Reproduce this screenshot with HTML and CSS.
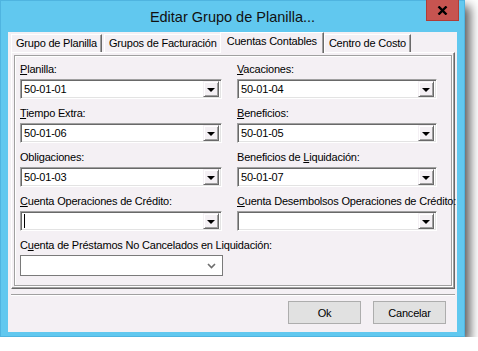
FILE: index.html
```html
<!DOCTYPE html>
<html lang="es">

<head>
    <meta charset="UTF-8" />
    <meta name="viewport" content="width=device-width, initial-scale=1.0" />
    <title>Editar Grupo de Planilla...</title>
    <link rel="stylesheet" href="styles.css">
</head>

<body>
    <div class="window">
        <div class="titlebar">
            <span class="title">Editar Grupo de Planilla...</span>
            <button class="close" aria-label="Cerrar">
                <svg width="11" height="9" viewBox="0 0 11 9">
                    <path d="M1.5 0.5 L9.5 8.5 M9.5 0.5 L1.5 8.5" stroke="#000" stroke-width="2.4" fill="none" />
                </svg>
            </button>
        </div>

        <div class="client">
            <div class="tabs">
                <div class="tab">Grupo de Planilla</div>
                <div class="tab">Grupos de Facturación</div>
                <div class="tab active">Cuentas Contables</div>
                <div class="tab">Centro de Costo</div>
            </div>

            <div class="panel">
                <div class="group">
                    <div class="fields">
                        <div class="field">
                            <label><u>P</u>lanilla:</label>
                            <div class="combo"><span class="value">50-01-01</span><span class="drop"></span></div>
                        </div>
                        <div class="field">
                            <label><u>V</u>acaciones:</label>
                            <div class="combo"><span class="value">50-01-04</span><span class="drop"></span></div>
                        </div>
                        <div class="field">
                            <label><u>T</u>iempo Extra:</label>
                            <div class="combo"><span class="value">50-01-06</span><span class="drop"></span></div>
                        </div>
                        <div class="field">
                            <label><u>B</u>eneficios:</label>
                            <div class="combo"><span class="value">50-01-05</span><span class="drop"></span></div>
                        </div>
                        <div class="field">
                            <label>Obligaciones:</label>
                            <div class="combo"><span class="value">50-01-03</span><span class="drop"></span></div>
                        </div>
                        <div class="field">
                            <label>Beneficios de <u>L</u>iquidación:</label>
                            <div class="combo"><span class="value">50-01-07</span><span class="drop"></span></div>
                        </div>
                        <div class="field">
                            <label><u>C</u>uenta Operaciones de Crédito:</label>
                            <div class="combo"><span class="value"><span class="caret"></span></span><span class="drop"></span></div>
                        </div>
                        <div class="field">
                            <label><u>C</u>uenta Desembolsos Operaciones de Crédito:</label>
                            <div class="combo"><span class="value"></span><span class="drop"></span></div>
                        </div>
                        <div class="field">
                            <label>C<u>u</u>enta de Préstamos No Cancelados en Liquidación:</label>
                            <div class="combo flat">
                                <span class="value"></span>
                                <svg class="chevron" width="9" height="6" viewBox="0 0 9 6">
                                    <path d="M1 1 L4.5 4.5 L8 1" stroke="#6d6d6d" stroke-width="1.6" fill="none" />
                                </svg>
                            </div>
                        </div>
                    </div>
                </div>
            </div>

            <div class="footer">
                <button class="btn">Ok</button>
                <button class="btn">Cancelar</button>
            </div>
        </div>
    </div>
</body>

</html>
```

FILE: styles.css
```css
body {
    margin: 0;
    background-color: #fff;
    font-family: "Liberation Sans", Arial, sans-serif;
    font-size: 11px;
    letter-spacing: -0.2px;
    color: #000;
}

.window {
    box-sizing: border-box;
    width: 465px;
    height: 337px;
    border: 1px solid #4fb4e0;
    background-color: #61c8ef;
    box-shadow: 5px 6px 10px rgba(0, 0, 0, 0.65);
    display: flex;
    flex-direction: column;
}

/* barra de titulo */
.titlebar {
    height: 31px;
    display: grid;
    grid-template-columns: 1fr auto 1fr;
}

.title {
    grid-column: 2;
    align-self: center;
    font-size: 14.5px;
    letter-spacing: 0;
    color: #111;
    padding-top: 1px;
}

.close {
    grid-column: 3;
    justify-self: end;
    align-self: start;
    width: 33px;
    height: 21px;
    margin: -1px 5px 0 0;
    padding: 0;
    border: 1px solid #b03c36;
    border-top: none;
    background-color: #c75450;
    display: flex;
    align-items: center;
    justify-content: center;
}

.client {
    flex: 1;
    margin: 0 7px 4px 7px;
    padding: 0 2px 0 3px;
    background-color: #f4f0f4;
    display: flex;
    flex-direction: column;
}

/* pestañas */
.tabs {
    height: 20px;
    display: flex;
    align-items: flex-end;
    position: relative;
    z-index: 1;
}

.tab {
    box-sizing: border-box;
    height: 18px;
    padding: 2px 4px 0 4px;
    border-top: 1px solid #fff;
    border-left: 1px solid #fff;
    border-right: 1px solid #696969;
    box-shadow: inset -1px 0 0 #a0a0a0;
    background-color: #f4f0f4;
    white-space: nowrap;
}

.tab + .tab {
    margin-left: 2px;
}

.tab.active {
    height: 21px;
    margin: 0 -2px -1px -2px;
    padding: 2px 6px 0 6px;
}

.tab.active + .tab {
    margin-left: 2px;
}

.panel {
    height: 237px;
    box-sizing: border-box;
    border-top: 1px solid #fff;
    border-left: 1px solid #fff;
    border-right: 1px solid #696969;
    border-bottom: 1px solid #696969;
    box-shadow: inset -1px -1px 0 #a0a0a0;
    padding: 2px;
}

.group {
    height: 100%;
    box-sizing: border-box;
    border: 1px solid #a0a0a0;
    box-shadow: inset 1px 1px 0 #fff, 1px 1px 0 #fff;
    padding: 7px 0 0 5px;
}

.fields {
    display: grid;
    grid-template-columns: 202px 200px;
    column-gap: 15px;
    row-gap: 8px;
}

.field label {
    display: block;
    line-height: 13px;
    margin-bottom: 3px;
    white-space: nowrap;
}

.combo {
    box-sizing: border-box;
    height: 20px;
    border-top: 1px solid #a0a0a0;
    border-left: 1px solid #a0a0a0;
    border-right: 1px solid #fff;
    border-bottom: 1px solid #fff;
    box-shadow: inset 1px 1px 0 #696969, inset -1px -1px 0 #e3e3e3;
    background-color: #fff;
    display: flex;
    align-items: center;
    padding: 1px 2px 1px 2px;
}

.value {
    flex: 1;
    padding-left: 1px;
    line-height: 14px;
    height: 14px;
}

.caret {
    display: inline-block;
    width: 1px;
    height: 14px;
    background-color: #000;
    vertical-align: top;
}

.drop {
    box-sizing: border-box;
    width: 16px;
    height: 16px;
    border-top: 1px solid #f4f0f4;
    border-left: 1px solid #f4f0f4;
    border-right: 1px solid #696969;
    border-bottom: 1px solid #696969;
    box-shadow: inset 1px 1px 0 #fff, inset -1px -1px 0 #a0a0a0;
    background-color: #f4f0f4;
    display: flex;
    align-items: center;
    justify-content: center;
}

.drop::after {
    content: "";
    border-left: 4px solid transparent;
    border-right: 4px solid transparent;
    border-top: 4px solid #000;
    margin-top: 1px;
}

.combo.flat {
    width: 203px;
    height: 21px;
    border: 1px solid #7a7a7a;
    box-shadow: none;
    padding: 0 6px 0 2px;
}

/* botones */
.footer {
    flex: 1;
    margin-top: 5px;
    border-top: 1px solid #a0a0a0;
    box-shadow: inset 0 1px 0 #fff;
    display: flex;
    justify-content: flex-end;
    align-items: flex-start;
    gap: 12px;
    padding: 6px 9px 0 0;
}

.btn {
    width: 73px;
    height: 23px;
    font-family: "Liberation Sans", Arial, sans-serif;
    font-size: 11px;
    letter-spacing: -0.2px;
    background-color: #e1e1e1;
    border: 1px solid #adadad;
    color: #000;
    padding: 0;
}
```
